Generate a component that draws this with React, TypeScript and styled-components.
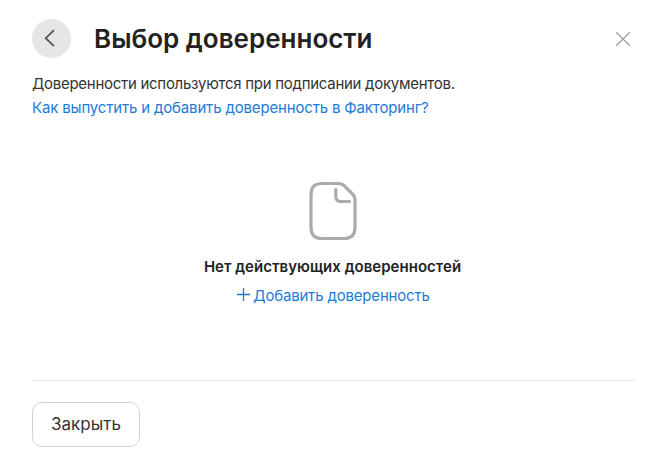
import React from 'react';
import styled, { createGlobalStyle } from 'styled-components';

const GlobalStyle = createGlobalStyle`
  * { box-sizing: border-box; }
  body {
    margin: 0;
    background: #fff;
    color: #222;
    font-family: Inter, "Open Sans", sans-serif;
  }
`;

const Panel = styled.main`
  display: flex;
  flex-direction: column;
  width: 660px;
  height: 461px;
  padding: 19px 25px 14px 32px;
  overflow: hidden;
`;

const Header = styled.header`
  display: flex;
  align-items: center;
  height: 39px;
`;

const BackButton = styled.button`
  display: flex;
  width: 39px;
  height: 39px;
  padding: 0;
  border: 0;
  border-radius: 50%;
  background: #e6e6e6;
`;

const Title = styled.h1`
  flex: 1;
  margin: 0 0 0 23px;
  font-size: 26px;
  line-height: 39px;
  font-weight: 600;
  white-space: nowrap;
`;

const CloseButton = styled.button`
  display: flex;
  padding: 0;
  border: 0;
  background: none;
  margin-right: 3px;
`;

const Intro = styled.p`
  display: flex;
  flex-direction: column;
  align-items: flex-start;
  margin: 14px 0 0;
  font-size: 15px;
  line-height: 24px;
  white-space: nowrap;
`;

const IntroText = styled.span`
  color: #333;
  letter-spacing: -0.275px;
`;

const Link = styled.a`
  color: #1d7bd7;
  text-decoration: none;
  letter-spacing: -0.165px;
`;

const EmptyState = styled.section`
  display: flex;
  flex: 1;
  flex-direction: column;
  align-items: center;
  padding: 61px 2px 0 0;
  white-space: nowrap;
`;

const EmptyTitle = styled.h2`
  margin: 14px 0 0;
  font-size: 15px;
  line-height: 24px;
  font-weight: 600;
  letter-spacing: 0.03px;
`;

const AddLink = styled.a`
  display: flex;
  align-items: flex-start;
  gap: 3px;
  margin: 5px 0 0 2px;
  color: #1d7bd7;
  font-size: 15px;
  line-height: 24px;
  letter-spacing: -0.18px;
`;

const PlusIcon = styled.svg`
  margin-top: 4px;
`;

const Footer = styled.footer`
  display: flex;
  padding-top: 21px;
  border-top: 1px solid #e9e9e9;
`;

const FooterButton = styled.button`
  width: 108px;
  height: 45px;
  padding: 0 0 1px;
  border: 1px solid #d2d2d2;
  border-radius: 10px;
  background: #fff;
  color: #333;
  font: 400 17px/24px Inter, "Open Sans", sans-serif;
`;

export default function App() {
  return (
    <>
      <GlobalStyle />
      <Panel>
        <Header>
          <BackButton aria-label="Назад">
            <svg width="39" height="39" fill="none" stroke="#555" strokeWidth="1.8">
              <path d="M22 11.2 13.7 19.2 22 27.2" />
            </svg>
          </BackButton>
          <Title>Выбор доверенности</Title>
          <CloseButton aria-label="Закрыть окно">
            <svg width="18" height="18" fill="none" stroke="#a3a3a3" strokeWidth="1.4">
              <path d="M2.2 2.2 15.8 15.8M15.8 2.2 2.2 15.8" />
            </svg>
          </CloseButton>
        </Header>
        <Intro>
          <IntroText>Доверенности используются при подписании документов.</IntroText>
          <Link>Как выпустить и добавить доверенность в Факторинг?</Link>
        </Intro>
        <EmptyState>
          <svg width="48" height="60" fill="none" stroke="#ababab" strokeWidth="3.2" strokeLinecap="round" strokeLinejoin="round">
            <path d="M12 2.5H29.5C32 2.5 33.6 3.1 35 4.5L43.6 13.1C45.2 14.7 46 16.2 46 18.5V46.5Q46 57.5 35 57.5H13Q2 57.5 2 46.5V13.5Q2 2.5 13 2.5Z" />
            <path d="M26.8 8.5V15.5Q26.8 20.5 31.8 20.5H40.5" />
          </svg>
          <EmptyTitle>Нет действующих доверенностей</EmptyTitle>
          <AddLink>
            <PlusIcon width="13" height="13" fill="none" stroke="currentColor" strokeWidth="1.3">
              <path d="M6.5 0V13M0 6.5H13" />
            </PlusIcon>
            <span>Добавить доверенность</span>
          </AddLink>
        </EmptyState>
        <Footer>
          <FooterButton>Закрыть</FooterButton>
        </Footer>
      </Panel>
    </>
  );
}
